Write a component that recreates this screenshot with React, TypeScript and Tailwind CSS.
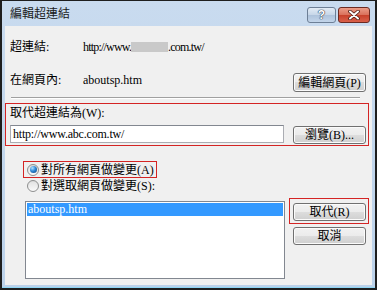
import React from 'react';

function Btn({ children, className = '' }: { children: React.ReactNode; className?: string }) {
  return (
    <div
      className={`flex items-center justify-center rounded-[3px] border border-[#707070] bg-[linear-gradient(#f2f2f2_0%,#ebebeb_50%,#dddddd_50%,#cfcfcf_100%)] text-[12px] leading-[12px] text-black shadow-[inset_0_0_0_1px_#fbfbfb] ${className}`}
    >
      {children}
    </div>
  );
}

function Radio({ checked }: { checked?: boolean }) {
  return (
    <div className="flex h-[12px] w-[12px] shrink-0 items-center justify-center rounded-full border border-[#8e8f8f] bg-[linear-gradient(#dcdcdc,#fbfbfb)]">
      {checked ? (
        <div className="h-[7px] w-[7px] rounded-full bg-[radial-gradient(circle_at_35%_30%,#b6e2ff_0%,#2f8ad8_45%,#0e3f78_100%)]" />
      ) : (
        <div className="h-[8px] w-[8px] rounded-full bg-[linear-gradient(#e4e4e4,#f7f7f7)]" />
      )}
    </div>
  );
}

export default function App() {
  return (
    <div className="h-[290px] w-[377px] border-x-[2px] border-b-[2px] border-t-[1px] border-[#1e1e1e] font-['Liberation_Serif','Noto_Sans_CJK_TC',serif] text-[12px] text-black">
      <div className="flex h-full flex-col border-b border-[#8fd6f4] bg-[linear-gradient(#c9dbef,#bcd2ea)] px-[3px] pb-[2px]">
        {/* 標題列 */}
        <div className="flex h-[25px] items-start">
          <span className="mt-[6px] pl-[5px] leading-[14px] text-[#1a1a1a]">編輯超連結</span>
          <div className="ml-auto mr-[2px] mt-[6px] flex gap-[2px]">
            <div className="flex h-[16px] w-[29px] items-center justify-center rounded-[3px] border border-[#6d7f96] bg-[linear-gradient(#e2ebf5_0%,#c6d6e8_50%,#adc2db_50%,#c3d5ea_100%)]">
              <span className="font-['Liberation_Sans',sans-serif] text-[12px] font-bold leading-[12px] text-white [text-shadow:0_0_1px_#2c3a4c,0_0_1px_#2c3a4c,0_0_1px_#2c3a4c]">?</span>
            </div>
            <div className="flex h-[16px] w-[32px] items-center justify-center rounded-[3px] border border-[#6b2a22] bg-[linear-gradient(#eb9c88_0%,#d9705a_50%,#c7402a_50%,#d9604a_100%)]">
              <svg width="12" height="10" viewBox="0 0 12 10">
                <path d="M2 1.5 L10 8.5 M10 1.5 L2 8.5" stroke="#4a1a12" strokeWidth="3.6" strokeLinecap="round" />
                <path d="M2 1.5 L10 8.5 M10 1.5 L2 8.5" stroke="#ffffff" strokeWidth="2" strokeLinecap="round" />
              </svg>
            </div>
          </div>
        </div>

        {/* 內容 */}
        <div className="flex-1 bg-[#f0f0f0]">
          <div className="ml-[5px] mt-[13px] flex h-[16px] items-center leading-[16px]">
            <span className="w-[73px]">超連結:</span>
            <span className="tracking-[-0.8px]">http://www.</span>
            <span className="inline-block h-[10px] w-[37px] bg-[#c9c9c9]" />
            <span className="tracking-[-0.8px]">.com.tw/</span>
          </div>

          <div className="ml-[5px] mr-[6px] mt-[17px] flex items-start">
            <span className="w-[73px] pt-[1px] leading-[14px]">在網頁內:</span>
            <span className="pt-[1px] leading-[14px]">aboutsp.htm</span>
            <Btn className="ml-auto mt-[1px] h-[19px] w-[73px]">編輯網頁(P)</Btn>
          </div>

          <div className="ml-[6px] mr-[12px] mt-[5px] h-[2px] border-t border-b border-t-[#a0a0a0] border-b-white" />

          {/* 取代超連結為 */}
          <div className="mr-[3px] mt-[4px] border border-[#d42424] px-[4px] pb-[1px] pt-[2px]">
            <div className="leading-[14px]">取代超連結為(W):</div>
            <div className="mt-[5px] flex items-start">
              <div className="flex h-[18px] w-[274px] items-center border border-[#abadb3] border-t-[#828790] bg-white pl-[2px] leading-[14px] tracking-[-0.2px]">
                http://www.abc.com.tw/
              </div>
              <Btn className="ml-auto mr-[-2px] mt-[1px] h-[18px] w-[73px]">瀏覽(B)...</Btn>
            </div>
          </div>

          {/* 選項 */}
          <div className="ml-[18px] mt-[15px] flex h-[17px] w-[134px] items-center border border-[#d42424] pl-[3px]">
            <Radio checked />
            <span className="ml-[2px] leading-[14px]">對所有網頁做變更(A)</span>
          </div>
          <div className="ml-[22px] mt-[1px] flex h-[14px] items-center">
            <Radio />
            <span className="ml-[2px] leading-[14px]">對選取網頁做變更(S):</span>
          </div>

          <div className="mt-[8px] flex items-start">
            <div className="ml-[20px] h-[78px] w-[260px] border border-[#828790] bg-white p-[1px]">
              <div className="h-[13px] bg-[#3399ff] pl-[1px] leading-[13px] text-white">aboutsp.htm</div>
            </div>
            <div className="ml-auto mr-[3px] mt-[-3px] flex w-[80px] flex-col">
              <div className="border border-[#d42424] pb-[2px] pl-[3px] pt-[4px]">
                <Btn className="h-[18px] w-[73px] border-[#3c7fb1] shadow-[inset_0_0_0_1px_#48d3fb]">取代(R)</Btn>
              </div>
              <Btn className="ml-[4px] mt-[3px] h-[18px] w-[73px]">取消</Btn>
            </div>
          </div>
        </div>
      </div>
    </div>
  );
}
